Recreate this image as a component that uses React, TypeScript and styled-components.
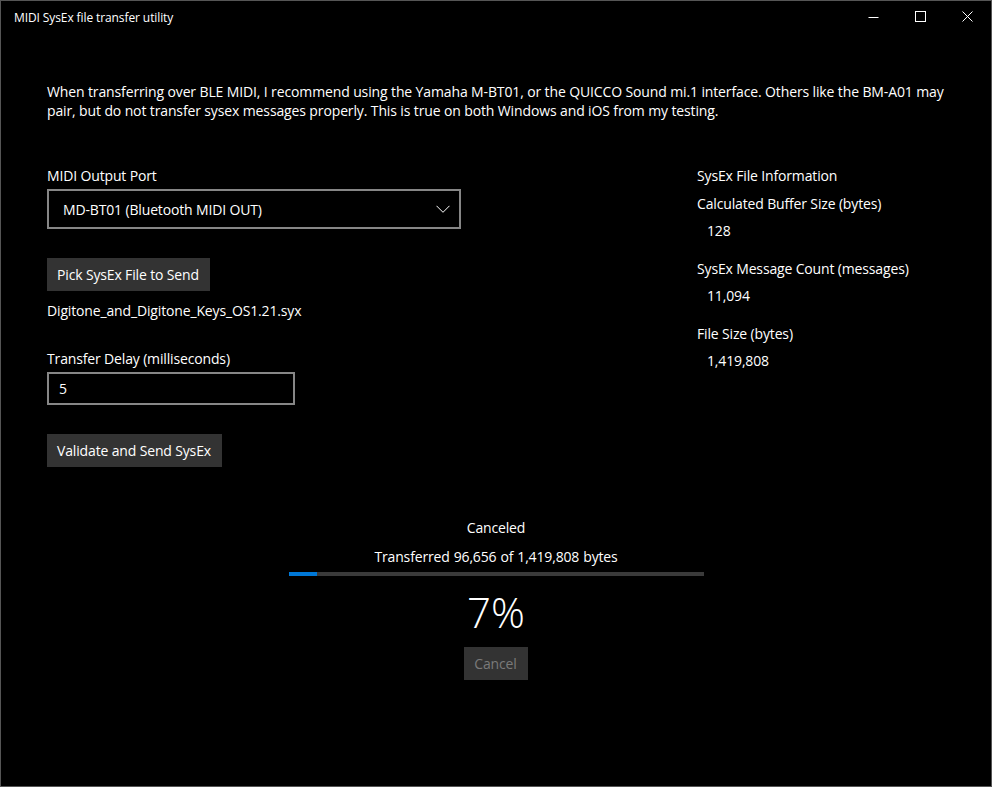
import React from "react";
import styled, { createGlobalStyle } from "styled-components";

const GlobalStyle = createGlobalStyle`
  html, body {
    margin: 0;
    padding: 0;
    background: #000;
  }
  body {
    font-family: "Open Sans", "Noto Sans", sans-serif;
    color: #fff;
    letter-spacing: -0.15px;
  }
  * {
    box-sizing: border-box;
  }
`;

const Window = styled.div`
  width: 992px;
  height: 787px;
  background: #000;
  border: 1px solid #555;
  display: flex;
  flex-direction: column;
  overflow: hidden;
`;

const TitleBar = styled.div`
  height: 32px;
  flex-shrink: 0;
  display: flex;
  align-items: center;
`;

const Title = styled.div`
  flex: 1;
  padding-left: 13px;
  font-size: 12px;
  letter-spacing: -0.1px;
`;

const CaptionButton = styled.div`
  width: 47px;
  height: 32px;
  display: flex;
  align-items: center;
  justify-content: center;
`;

const Content = styled.div`
  flex: 1;
  display: flex;
  flex-direction: column;
  padding: 0 46px;
  font-size: 14px;
`;

const Intro = styled.p`
  margin: 49px -14px 0 0;
  line-height: 19px;
  letter-spacing: -0.125px;
`;

const Columns = styled.div`
  display: grid;
  grid-template-columns: 414px 1fr;
  column-gap: 236px;
  margin-top: 46px;
`;

const Stack = styled.div`
  display: flex;
  flex-direction: column;
  align-items: flex-start;
`;

const Text = styled.div<{ $top?: number; $indent?: number }>`
  line-height: 20px;
  margin-top: ${({ $top }) => $top ?? 0}px;
  padding-left: ${({ $indent }) => $indent ?? 0}px;
  white-space: nowrap;
`;

const Combo = styled.div`
  margin-top: 3px;
  width: 414px;
  height: 40px;
  border: 2px solid #868686;
  display: flex;
  align-items: center;
  justify-content: space-between;
  padding: 0 9px 0 14px;
`;

const TextBox = styled.div`
  margin-top: 3px;
  width: 248px;
  height: 33px;
  border: 2px solid #868686;
  display: flex;
  align-items: center;
  padding-left: 10px;
`;

const Button = styled.div<{ $top?: number; $disabled?: boolean }>`
  margin-top: ${({ $top }) => $top ?? 0}px;
  height: 33px;
  padding: 0 11px 0 10px;
  display: inline-flex;
  align-items: center;
  background: #333;
  color: ${({ $disabled }) => ($disabled ? "#7a7a7a" : "#fff")};
  white-space: nowrap;
`;

const Progress = styled.div`
  margin-top: 51px;
  display: flex;
  flex-direction: column;
  align-items: center;
`;

const TransferLine = styled.div`
  margin-top: 9px;
  line-height: 20px;
  display: flex;
  gap: 4px;
`;

const Track = styled.div`
  margin-top: 5px;
  width: 415px;
  height: 4px;
  background: #3a3a3a;
`;

const Fill = styled.div`
  height: 100%;
  background: #0078d7;
`;

const Percent = styled.div`
  margin-top: 11px;
  font-size: 42px;
  line-height: 50px;
  font-weight: 300;
  letter-spacing: 0;
`;

const Glyph = (props: React.SVGProps<SVGSVGElement>) => (
  <svg width="12" height="12" viewBox="0 0 12 12" fill="none" stroke="#fff" strokeWidth="1" {...props} />
);

export default function App() {
  const sent = 96656;
  const total = 1419808;
  const pct = (sent / total) * 100;
  return (
    <>
      <GlobalStyle />
      <Window>
        <TitleBar>
          <Title>MIDI SysEx file transfer utility</Title>
          <CaptionButton>
            <Glyph>
              <path d="M0.5 6.5h10" />
            </Glyph>
          </CaptionButton>
          <CaptionButton>
            <Glyph>
              <rect x="0.5" y="0.5" width="10" height="10" />
            </Glyph>
          </CaptionButton>
          <CaptionButton>
            <Glyph>
              <path d="M0.5 0.5l10 10M10.5 0.5l-10 10" />
            </Glyph>
          </CaptionButton>
        </TitleBar>
        <Content>
          <Intro>
            When transferring over BLE MIDI, I recommend using the Yamaha M-BT01, or the QUICCO Sound mi.1
            interface. Others like the BM-A01 may pair, but do not transfer sysex messages properly. This is true
            on both Windows and iOS from my testing.
          </Intro>
          <Columns>
            <Stack>
              <Text>MIDI Output Port</Text>
              <Combo>
                <span>MD-BT01 (Bluetooth MIDI OUT)</span>
                <svg width="14" height="8" viewBox="0 0 14 8" fill="none" stroke="#fff" strokeWidth="1">
                  <path d="M0.5 0.8l6.5 6.5 6.5-6.5" />
                </svg>
              </Combo>
              <Button $top={29}>Pick SysEx File to Send</Button>
              <Text $top={10}>Digitone_and_Digitone_Keys_OS1.21.syx</Text>
              <Text $top={28}>Transfer Delay (milliseconds)</Text>
              <TextBox>5</TextBox>
              <Button $top={29}>Validate and Send SysEx</Button>
            </Stack>
            <Stack>
              <Text>SysEx File Information</Text>
              <Text $top={8}>Calculated Buffer Size (bytes)</Text>
              <Text $top={7} $indent={10}>128</Text>
              <Text $top={18}>SysEx Message Count (messages)</Text>
              <Text $top={7} $indent={10}>11,094</Text>
              <Text $top={18}>File Size (bytes)</Text>
              <Text $top={7} $indent={10}>1,419,808</Text>
            </Stack>
          </Columns>
          <Progress>
            <Text>Canceled</Text>
            <TransferLine>
              <span>Transferred</span>
              <span>96,656</span>
              <span>of</span>
              <span>1,419,808</span>
              <span>bytes</span>
            </TransferLine>
            <Track>
              <Fill style={{ width: `${pct}%` }} />
            </Track>
            <Percent>{Math.round(pct)}%</Percent>
            <Button $top={10} $disabled>
              Cancel
            </Button>
          </Progress>
        </Content>
      </Window>
    </>
  );
}
